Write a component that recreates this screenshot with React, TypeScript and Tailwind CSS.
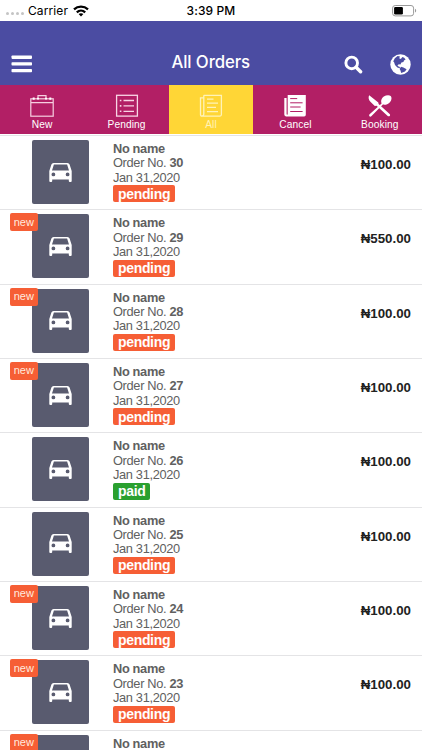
const orders = [
  { id: 30, price: '100.00', status: 'pending', isNew: false },
  { id: 29, price: '550.00', status: 'pending', isNew: true },
  { id: 28, price: '100.00', status: 'pending', isNew: true },
  { id: 27, price: '100.00', status: 'pending', isNew: true },
  { id: 26, price: '100.00', status: 'paid', isNew: false },
  { id: 25, price: '100.00', status: 'pending', isNew: false },
  { id: 24, price: '100.00', status: 'pending', isNew: true },
  { id: 23, price: '100.00', status: 'pending', isNew: true },
  { id: 22, price: '100.00', status: 'pending', isNew: true }
];

const tabs = ['New', 'Pending', 'All', 'Cancel', 'Booking'];

function StatusBar() {
  return (
    <div className="flex h-[21px] shrink-0 items-center bg-white px-[6px] text-black">
      <div className="flex flex-1 items-center">
        <div className="mt-[6px] flex gap-[1.6px]">
          {[0, 1, 2, 3].map((dot) => (
            <span key={dot} className="size-[3.3px] rounded-full bg-[#c4c4c4]" />
          ))}
        </div>
        <span className="ml-[4px] font-[Inter] text-[12px] leading-none tracking-[0.1px]">Carrier</span>
        <svg viewBox="0 0 16 12" className="ml-[5px] h-[12px] w-[16px]" fill="none" stroke="#000" strokeWidth="2.3">
          <path d="M1 4.4C5 .7 11 .7 15 4.4" />
          <path d="M3.8 7.3C6.3 5 9.7 5 12.2 7.3" />
          <path d="M5.6 9.1C7 7.9 9 7.9 10.4 9.1L8 11.6Z" fill="#000" stroke="none" />
        </svg>
      </div>
      <span className="font-[Inter] text-[12px] font-medium leading-none tracking-[0.1px]">3:39 PM</span>
      <div className="flex flex-1 justify-end">
        <svg viewBox="0 0 25 12" className="-mr-[1px] h-[12px] w-[25px]">
          <rect x="0.6" y="0.5" width="21" height="10.4" rx="2.6" fill="none" stroke="#9a9a9a" />
          <rect x="2.1" y="2" width="8.8" height="7.4" rx="1.2" fill="#000" />
          <path d="M23 3.8C24.6 4.4 24.6 7 23 7.6Z" fill="#9a9a9a" />
        </svg>
      </div>
    </div>
  );
}

function Header() {
  return (
    <header className="flex h-[64px] shrink-0 items-end bg-[#4b4ca2] pb-[10.5px] text-white">
      <div className="flex flex-1 pl-[11px]">
        <svg viewBox="0 0 21 18" className="mb-[2px] h-[18px] w-[21px]" fill="#fff">
          <rect x="0.5" y="0.5" width="20.5" height="3.4" rx="0.8" />
          <rect x="0.5" y="7.2" width="20.5" height="3.4" rx="0.8" />
          <rect x="0.5" y="13.9" width="20.5" height="3.4" rx="0.8" />
        </svg>
      </div>
      <h1 className="font-[Inter] text-[16.8px] font-medium leading-[25px] tracking-[-0.1px]">All Orders</h1>
      <div className="flex flex-1 items-center justify-end pr-[11.5px]">
        <svg viewBox="0 0 19 19" className="mr-[26.5px] size-[19px]" fill="none" stroke="#fff">
          <circle cx="7.7" cy="7.9" r="5.8" strokeWidth="2.9" />
          <path d="M12.3 12.5L16.6 16.8" strokeWidth="3.4" strokeLinecap="round" />
        </svg>
        <svg viewBox="0 0 21 21" className="size-[21px]">
          <circle cx="10.5" cy="10.5" r="10.2" fill="#fff" />
          <path d="M7.6 2L10 2.6 9.2 4.2 10.8 4.9 12.4 3 14.2 3.8 15.6 5.6 14 6.4 13.4 8 11.4 8.4 10.4 10.4 8.8 10.2 7.4 11.4 8.6 12.4 10 13 9.6 14.2 7.4 13.4 5 11 4 8 3.2 7.6 4.8 4.2Z" fill="#4b4ca2" />
          <path d="M11 12.8L13.4 13.4 16.6 15.2 15 17.4 11.2 19 10.4 16.2 9.6 15Z" fill="#4b4ca2" />
        </svg>
      </div>
    </header>
  );
}

function TabIcon({ name }: { name: string }) {
  if (name === 'New') {
    return (
      <svg viewBox="0 0 24 24" className="size-[24px]" fill="none" stroke="#f6cfe0" strokeWidth="1.2">
        <rect x="0.8" y="4.8" width="22.4" height="17.4" />
        <path d="M1 8.7H23M8 5V1.6H16V5" />
        <path d="M3.7 3.6V5.8M20.3 3.6V5.8M8 3.8V5.6M16 3.8V5.6" strokeWidth="2" stroke="#fff" />
      </svg>
    );
  }
  if (name === 'Pending') {
    return (
      <svg viewBox="0 0 24 24" className="size-[24px]" fill="none" stroke="#f8d5e5" strokeWidth="1.3">
        <rect x="1.6" y="1.3" width="20.8" height="20.8" />
        <path d="M8.5 6.5H19M8.5 11.9H19M8.5 17.3H19" />
        <path d="M4.8 6.5H6.4M4.8 11.9H6.4M4.8 17.3H6.4" strokeWidth="1.6" />
      </svg>
    );
  }
  if (name === 'All') {
    return (
      <svg viewBox="0 0 24 24" className="size-[24px]" fill="none" stroke="#fff3b8" strokeWidth="1.3">
        <path d="M4.8 1.3H22.4V20.6Q22.4 22.1 21 22.1H3Q1.5 22.1 1.5 20.5V3.8H4.8M4.8 1.3V20.2Q4.8 22 3.1 22" />
        <path d="M8 5.1H14.5M8 9.1H19M8 13.3H17M8 17.6H19" />
      </svg>
    );
  }
  if (name === 'Cancel') {
    return (
      <svg viewBox="0 0 24 24" className="size-[24px]" fill="none">
        <path d="M4.7 1H22.8V20.8Q22.8 22.4 21.2 22.4H3Q1.3 22.4 1.3 20.6V4H3.6V20Q3.6 20.7 4.2 20.7Q4.7 20.7 4.7 20Z" fill="#fff" />
        <path d="M7.2 4.6H14.2M7.2 8.8H19.6M7.2 13H17.6M7.2 17.5H19.6" stroke="#b21f65" strokeWidth="1" />
      </svg>
    );
  }
  return (
    <svg viewBox="0 0 24 24" className="size-[24px]" fill="#fff">
      <path d="M1.2 1.2C.1 3.2.5 5.6 2.4 7.8L6.8 11.9 8.6 11.7 20 22.2C21.4 22.8 22.6 21.6 21.9 20.3L10.6 10 10.3 8.4Z" />
      <path d="M1.7 22.4C.9 21.8.9 20.9 1.6 20.2L13.6 9.4C12.5 7 13.4 4.2 15.8 2.5 18.2.9 21.3.7 22.7 2 24.1 3.4 23.6 6.3 21.7 8.4 19.8 10.4 17.2 11.1 14.9 10.6L3.3 22.2C2.8 22.7 2.2 22.8 1.7 22.4Z" />
    </svg>
  );
}

function Tabs() {
  return (
    <nav className="grid h-[49px] shrink-0 grid-cols-5 bg-[#b21f65]">
      {tabs.map((tab) => (
        <div
          key={tab}
          className={
            tab === 'All'
              ? 'flex flex-col items-center bg-[#ffd636] pt-[9px] text-[#fff3b8]'
              : 'flex flex-col items-center pt-[9px] text-white'
          }
        >
          <TabIcon name={tab} />
          <span className="text-[10.2px] leading-[13px] tracking-[0.1px]">{tab}</span>
        </div>
      ))}
    </nav>
  );
}

function CarIcon() {
  return (
    <svg viewBox="0 0 23 19" className="h-[19px] w-[23px]">
      <path
        fill="#fff"
        fillRule="evenodd"
        d="M4.6 0H18.4Q20.1 0 20.6 1.5L22.7 8V18Q22.7 19 21.7 19H20.8Q19.8 19 19.8 18V16.4H3.2V18Q3.2 19 2.2 19H1.3Q.3 19 .3 18V8L2.4 1.5Q2.9 0 4.6 0ZM4.9 1.6L3 7.4H20L18.1 1.6ZM4.4 9.5A1.9 1.9 0 1 0 4.4 13.3A1.9 1.9 0 1 0 4.4 9.5ZM18.6 9.5A1.9 1.9 0 1 0 18.6 13.3A1.9 1.9 0 1 0 18.6 9.5Z"
      />
    </svg>
  );
}

function OrderRow({ order }: { order: (typeof orders)[number] }) {
  return (
    <div className="relative flex h-[74.35px] shrink-0 items-start border-b border-[#e4e4e6] pl-[32px] pr-[11px] pt-[4px]">
      <div className="flex h-[64px] w-[57px] items-center justify-center rounded-[2px] bg-[#595b6f]">
        <CarIcon />
      </div>
      {order.isNew && (
        <span className="absolute left-[10px] top-[3px] flex h-[18px] w-[27.5px] items-center justify-center rounded-[2px] bg-[#f65e35] pb-[1px] text-[11px] text-[#ffeadf]">
          new
        </span>
      )}
      <div className="ml-[24px] mt-[2px] flex-1 text-[12.8px] leading-[14.3px] tracking-[-0.33px] text-[#606060]">
        <p className="font-bold">No name</p>
        <p>
          Order No. <b>{order.id}</b>
        </p>
        <p>Jan 31,2020</p>
        <span
          className={
            order.status === 'paid'
              ? 'mt-[0.5px] flex h-[17px] w-fit items-center rounded-[2px] bg-[#2aa02f] px-[5px] text-[14px] font-bold text-white'
              : 'mt-[0.5px] flex h-[17px] w-fit items-center rounded-[2px] bg-[#f65e35] px-[5px] text-[14px] font-bold text-white'
          }
        >
          {order.status}
        </span>
      </div>
      <span className="mt-[17px] text-[13.3px] font-bold leading-[16px] text-[#222]">₦{order.price}</span>
    </div>
  );
}

export default function App() {
  return (
    <div className="flex h-[750px] w-[422px] flex-col overflow-hidden bg-white font-['Liberation_Sans',sans-serif]">
      <StatusBar />
      <Header />
      <Tabs />
      <main className="mt-[1px] flex min-h-0 flex-1 flex-col overflow-hidden border-t border-[#e4e4e6]">
        {orders.map((order) => (
          <OrderRow key={order.id} order={order} />
        ))}
      </main>
    </div>
  );
}
